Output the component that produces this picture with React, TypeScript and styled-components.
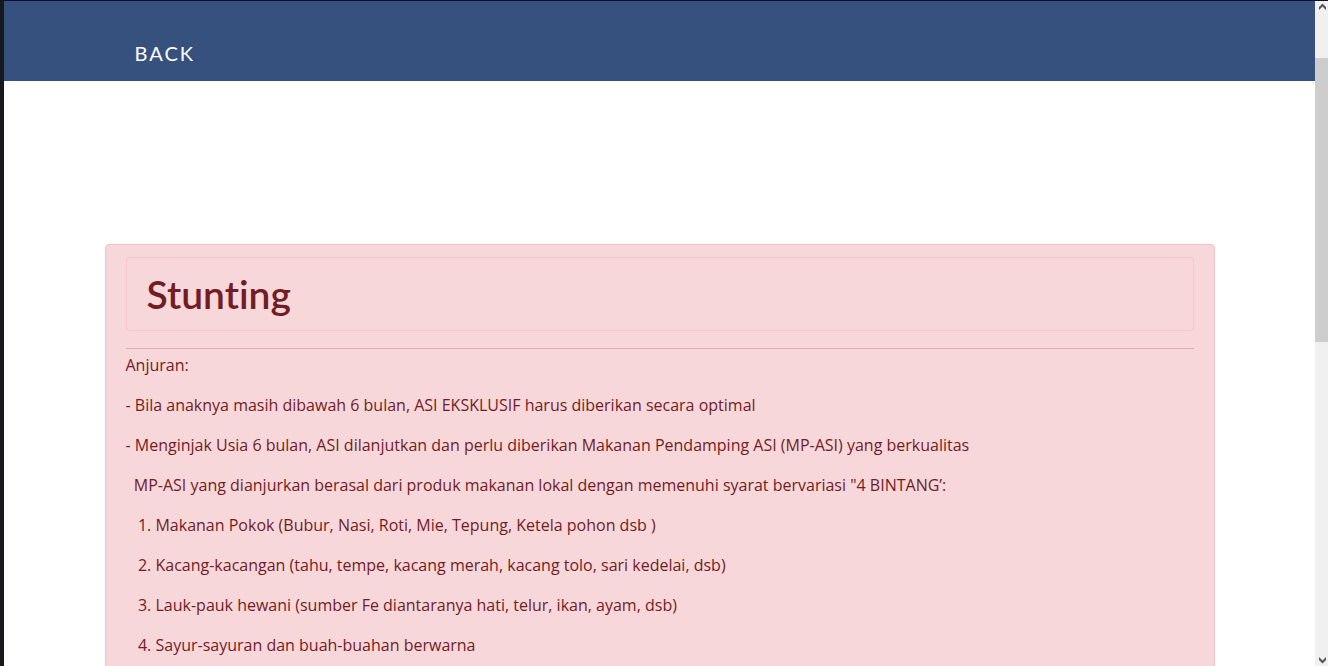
import React from "react";
import styled, { createGlobalStyle } from "styled-components";

const GlobalStyle = createGlobalStyle`
  *, *::before, *::after { box-sizing: border-box; }
  body {
    margin: 0;
    background: #fff;
    color: #444;
    font: 400 16px/24px "Open Sans", sans-serif;
  }
`;

const Screen = styled.div`
  display: flex;
  height: 100vh;
  overflow: hidden;
  border-top: 1px solid #07122b;
  border-left: 4px solid #17191d;
`;

const Page = styled.div`
  flex: 1;
  min-width: 0;
  overflow: hidden;
`;

const Container = styled.div`
  width: 100%;
  max-width: 1140px;
  margin: 0 auto;
  padding: 0 15px;
`;

const Header = styled.header`
  height: 80px;
  padding-top: 38px;
  background: #37517e;
`;

const BackLink = styled.a`
  display: inline-block;
  margin-left: 30px;
  color: #fff;
  font: 400 20px/28px Lato, sans-serif;
  letter-spacing: 2px;
  text-transform: uppercase;
  text-decoration: none;
`;

const Main = styled.main`
  padding-top: 163px;
`;

const Alert = styled.section`
  padding: 12px 20px;
  color: #721c24;
  background: #f8d7da;
  border: 1px solid #f0c3c9;
  border-radius: 4px;
`;

const TitleBox = styled.div`
  padding: 12px 20px;
  border: 1px solid #f5c6cb;
  border-radius: 4px;
`;

const Title = styled.h1`
  margin: 0;
  font: 600 39px/48px Lato, sans-serif;
  font-variant-ligatures: none;
`;

const Rule = styled.hr`
  margin: 17px 0 4px;
  border: 0;
  border-top: 1px solid #dba9ae;
`;

const Paragraph = styled.p`
  margin: 0 0 16px;
`;

const Scrollbar = styled.div`
  display: flex;
  flex-direction: column;
  flex: 0 0 13px;
  background: #f0f0f0;
`;

const ScrollButton = styled.button`
  display: flex;
  align-items: center;
  justify-content: center;
  flex: 0 0 12px;
  padding: 0 0 0 2px;
  border: 0;
  background: none;
  color: #555;
`;

const Track = styled.div`
  display: flex;
  flex-direction: column;
  flex: 1;
`;

const Space = styled.div<{ $share: number }>`
  flex: ${(p) => p.$share} 1 0;
`;

const Thumb = styled(Space)`
  background: #cdcdcd;
`;

const advice = [
  "Anjuran:",
  "- Bila anaknya masih dibawah 6 bulan, ASI EKSKLUSIF harus diberikan secara optimal",
  "- Menginjak Usia 6 bulan, ASI dilanjutkan dan perlu diberikan Makanan Pendamping ASI (MP-ASI) yang berkualitas",
  "\u00a0\u00a0MP-ASI yang dianjurkan berasal dari produk makanan lokal dengan memenuhi syarat bervariasi \"4 BINTANG’:",
  "\u00a0\u00a0\u00a01. Makanan Pokok (Bubur, Nasi, Roti, Mie, Tepung, Ketela pohon dsb )",
  "\u00a0\u00a0\u00a02. Kacang-kacangan (tahu, tempe, kacang merah, kacang tolo, sari kedelai, dsb)",
  "\u00a0\u00a0\u00a03. Lauk-pauk hewani (sumber Fe diantaranya hati, telur, ikan, ayam, dsb)",
  "\u00a0\u00a0\u00a04. Sayur-sayuran dan buah-buahan berwarna",
];

export default function App() {
  return (
    <>
      <GlobalStyle />
      <Screen>
        <Page>
          <Header>
            <Container>
              <BackLink href="#">Back</BackLink>
            </Container>
          </Header>
          <Main>
            <Container>
              <Alert>
                <TitleBox>
                  <Title>Stunting</Title>
                </TitleBox>
                <Rule />
                {advice.map((line) => (
                  <Paragraph key={line}>{line}</Paragraph>
                ))}
              </Alert>
            </Container>
          </Main>
        </Page>
        <Scrollbar>
          <ScrollButton aria-label="Scroll up">
            <svg width="9" height="8" viewBox="0 0 9 8">
              <path d="M4.5 0.5L8 4V7L4.5 3.5L1 7V4Z" fill="currentColor" />
            </svg>
          </ScrollButton>
          <Track>
            <Space $share={45} />
            <Thumb $share={284} />
            <Space $share={312} />
          </Track>
          <ScrollButton aria-label="Scroll down">
            <svg width="9" height="8" viewBox="0 0 9 8">
              <path d="M4.5 7.5L8 4V1L4.5 4.5L1 1V4Z" fill="currentColor" />
            </svg>
          </ScrollButton>
        </Scrollbar>
      </Screen>
    </>
  );
}
